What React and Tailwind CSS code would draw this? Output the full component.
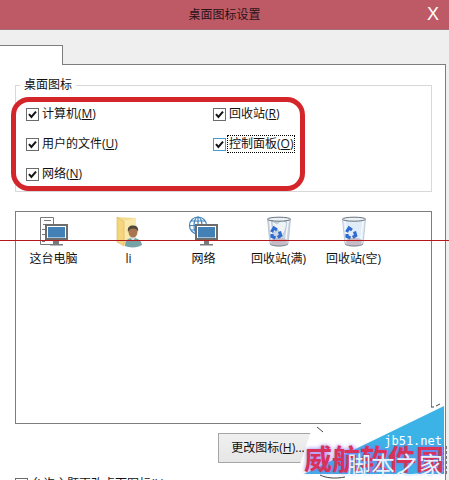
import React from "react";

const LINE = "border-[#7d7d7d]";

function Check({ label, hotkey, focused }) {
  return (
    <label className="flex h-[18px] items-center gap-0.5">
      <span className="relative block size-[13px] shrink-0">
        <input
          type="checkbox"
          defaultChecked
          className={`block size-[13px] appearance-none border bg-white ${focused ? "border-[#4a9cc8]" : "border-[#6b6b6b]"}`}
        />
        <svg viewBox="0 0 13 13" className="pointer-events-none absolute inset-0 size-[13px]" fill="none" stroke="#151515" strokeWidth="2">
          <path d="M3 6.2 L5.4 9 L10 3.6" />
        </svg>
      </span>
      <span
        className={`px-px leading-4 whitespace-nowrap ${focused ? "outline-1 outline-dotted outline-black" : ""}`}
      >
        {label}(<u>{hotkey}</u>)
      </span>
    </label>
  );
}

function Monitor() {
  return (
    <g>
      <rect x="8" y="9" width="21" height="14" fill="#fff" stroke="#6d6d6d" strokeWidth="2" />
      <rect x="10" y="11" width="17" height="10.500" fill="#4380b5" />
      <path d="M16 25h5v3h4v1.500H12V28h4z" fill="#77797b" />
    </g>
  );
}

function PcIcon() {
  return (
    <svg viewBox="0 0 32 32" className="size-8">
      <path d="M2.500 1.500h13v27h-13z" fill="#fff" stroke="#77797b" />
      <path d="M6 4.500h7M5 8.500h3M4 13.500h3M4 18.500h3M4 25.500h3" stroke="#77797b" />
      <Monitor />
    </svg>
  );
}

function NetworkIcon() {
  return (
    <svg viewBox="0 0 32 32" className="size-8">
      <g fill="none" stroke="#3f83bd" strokeWidth="1.200">
        <circle cx="10" cy="9.500" r="8.500" />
        <ellipse cx="10" cy="9.500" rx="4" ry="8.500" />
        <path d="M10 1v17M1.500 9.500h17M3 5h14M3 14h14" />
      </g>
      <Monitor />
    </svg>
  );
}

function FolderIcon() {
  return (
    <svg viewBox="0 0 32 32" className="size-8">
      <path d="M4 1l19 1v24l-11 4z" fill="#f3dc92" />
      <path d="M11 5l12-3v24l-12 3z" fill="#fae9ad" />
      <path d="M4 1l7 5v24l-7-4z" fill="#f5d67d" stroke="#dcb456" strokeWidth=".6" />
      <path d="M12 30c0-6 3-8 8-8s8 2 9 7c-4 3-13 3-17 1z" fill="#75a3a8" />
      <path d="M16 20l4 5 3-4z" fill="#d8e5e4" />
      <ellipse cx="20" cy="16" rx="4.500" ry="5.500" fill="#a97450" />
      <path d="M15 16c-1-5 2-7 5-6.500 4-.5 6 3 5 6-1-2-2-3-5-3-2 0-4 1-5 3.500z" fill="#50483c" />
    </svg>
  );
}

function BinIcon({ full }) {
  return (
    <svg viewBox="0 0 32 32" className="size-8">
      <path d="M4.500 3h23l-2.500 25c-2 3-16 3-18 0z" fill={full ? "#ccd7e1" : "#e0ecf8"} stroke="#b4becb" strokeWidth=".8" />
      <path d="M7 5l2.500 22M25 5l-2.500 22" stroke="#f5f9fd" strokeWidth="1.500" />
      {full && <path d="M9 5l5 3 5-4 5 3-2 8-3 5-4-6-5 3z" fill="#eef3f6" stroke="#9eb1c2" strokeWidth=".6" />}
      <path d="M8 24c4-3 12-3 16 0l-.6 4c-3 2.500-12 2.500-15 0z" fill="#c7bcc5" />
      <path d="M7 28c3 2.500 15 2.500 18 0" fill="none" stroke="#858995" />
      <ellipse cx="16" cy="3.200" rx="11.500" ry="2" fill="#edf2f6" stroke="#68727e" />
      <g fill="none" stroke="#2f6cd2" strokeWidth="3.200">
        <path d="M8.500 16l2.500-4 3 2" />
        <path d="M16.500 15.500l1.200 4-3 1.800" />
        <path d="M12.500 22l-3.500-1.500v-2.500" />
      </g>
    </svg>
  );
}

function Item({ icon, name }) {
  return (
    <li className="flex w-[75px] shrink-0 flex-col items-center gap-[3px]">
      {icon}
      <span className="leading-4 whitespace-nowrap">{name}</span>
    </li>
  );
}

function Watermark() {
  return (
    <div className="pointer-events-none absolute right-0 bottom-0 h-[90px] w-[149px] whitespace-nowrap">
      <svg viewBox="0 0 149 90" className="absolute inset-0 h-[90px] w-[149px]">
        <path d="M13 35H61V31L131 17H144V90H0V74z" fill="#fff" />
        <path d="M4 84L144 16V84z" fill="#3bb3e6" />
        <g fill="none" stroke="#444">
          <path d="M17 37l6 5" />
          <path d="M20 85c6 3 15 4 25 2" />
          <path d="M131 17h3M136 16l4-2" />
        </g>
        <path d="M146.500 56v28M143.500 57v26" stroke="#777" strokeDasharray="3 2" />
      </svg>
      <span className="absolute right-[5px] bottom-[8px] font-['Noto_Sans_CJK_SC',sans-serif] text-[28px] leading-7 font-bold text-[#d93258] text-shadow-[0_0_4px_#8d6cf0]">
        威航软件园
      </span>
      <span className="absolute right-[6px] bottom-[4px] font-['Noto_Sans_CJK_SC',sans-serif] text-2xl leading-6 text-[#e4f2ff]">
        脚本之家
      </span>
      <span className="absolute right-[7px] bottom-[31px] font-['DejaVu_Sans_Mono',monospace] text-xs leading-4 text-white">
        jb51.net
      </span>
    </div>
  );
}

export default function App() {
  return (
    <div className="relative h-screen overflow-hidden bg-[#efefef] font-['Open_Sans','Noto_Sans_CJK_SC',sans-serif] text-xs text-[#111]">
      <header className="relative flex h-[30px] items-center justify-center border-b border-[#a07078] bg-[#be5a66]">
        <h1 className="text-[#2c1216]">桌面图标设置</h1>
        <button
          aria-label="Close"
          className="absolute top-0 right-2 h-7 w-4 font-['Liberation_Sans',sans-serif] text-lg leading-7 text-white"
        >
          X
        </button>
      </header>

      <div className="flex h-[35px] items-end pr-[3px]">
        <div className={`h-5 w-[63px] border-t border-r bg-white ${LINE}`} />
        <div className={`h-px flex-1 border-t ${LINE}`} />
      </div>

      <main className={`mr-[3px] h-full border-r bg-white pt-3 pr-[13px] pl-[15px] ${LINE}`}>
        <fieldset className="h-[115px] border border-[#d8d8d8] pl-[10px]">
          <legend className="-ml-1.5 px-1 leading-4">桌面图标</legend>
          <div className="grid grid-cols-[187px_1fr] gap-y-3 pt-3">
            <Check label="计算机" hotkey="M" />
            <Check label="回收站" hotkey="R" />
            <Check label="用户的文件" hotkey="U" />
            <Check label="控制面板" hotkey="O" focused />
            <Check label="网络" hotkey="N" />
          </div>
        </fieldset>

        <ul className={`mt-[19px] flex h-[213px] items-start border pt-1 ${LINE}`}>
          <Item icon={<PcIcon />} name="这台电脑" />
          <Item icon={<FolderIcon />} name="li" />
          <Item icon={<NetworkIcon />} name="网络" />
          <Item icon={<BinIcon full />} name="回收站(满)" />
          <Item icon={<BinIcon />} name="回收站(空)" />
        </ul>

        <div className="mt-[9px] flex justify-end pr-[110px]">
          <button className="h-[30px] w-[104px] border border-[#a6a6a6] bg-linear-to-b from-[#f0f0f0] to-[#e6e6e6] pr-1 whitespace-nowrap">
            更改图标(<u>H</u>)...
          </button>
        </div>
        <div className="mt-3">
          <Check label="允许主题更改桌面图标" hotkey="L" />
        </div>
      </main>

      <div className="pointer-events-none absolute top-[97px] left-[11px] h-[94px] w-[294px] rounded-[18px] border-[5px] border-[#d4252b]" />
      <div className="pointer-events-none absolute top-[240px] left-0 h-px w-full bg-[#b5161c]" />

      <Watermark />
    </div>
  );
}
